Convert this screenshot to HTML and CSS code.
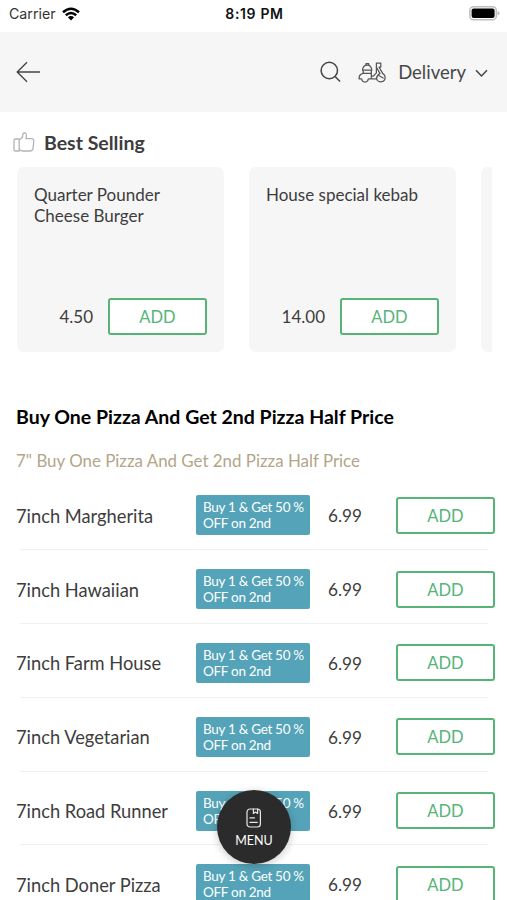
FILE: index.html
```html
<!DOCTYPE html>
<html lang="en">
<head>
<meta charset="utf-8">
<title>Menu</title>
<link rel="stylesheet" href="styles.css">
</head>
<body>
<div class="screen">
  <div class="status">
    <div class="carrier"><span>Carrier</span>
      <svg width="18" height="14" viewBox="0 0 18 14"><g fill="none" stroke="#000" stroke-width="2.5"><path d="M1 5.2Q9-1.8 17 5.2"/><path d="M3.8 8.2Q9 3.8 14.2 8.2"/></g><path d="M5.9 10.3Q9 7.7 12.1 10.3L9 13.6Z"/></svg>
    </div>
    <div class="clock">8:19 PM</div>
    <div class="battery"><svg width="31" height="15" viewBox="0 0 31 15"><rect x=".9" y=".8" width="26.4" height="13" rx="3.6" fill="#fff" stroke="#bdbdbd" stroke-width="1.5"/><rect x="2.6" y="2.5" width="23" height="9.6" rx="2" fill="#000"/><path d="M28.6 5Q30.6 5.8 30.6 7.3T28.6 9.6Z" fill="#b5b5b5"/></svg></div>
  </div>

  <header class="bar">
    <svg class="back" width="25" height="22" viewBox="0 0 25 22"><path d="M24 11H1.5M11 1.3L1.2 11L11 20.7" fill="none" stroke="#444" stroke-width="1.35"/></svg>
    <svg class="search" width="21" height="22" viewBox="0 0 21 22"><g fill="none" stroke="#444" stroke-width="1.5"><circle cx="9.3" cy="9.5" r="8.2"/><path d="M15.1 15.5L20 20.5"/></g></svg>
    <svg class="scooter" width="28" height="21" viewBox="0 0 28 21"><g fill="none" stroke="#555" stroke-width="1.25" stroke-linejoin="round"><path d="M4.5 8.2Q4.8 3 9.3 3Q13.4 3 13.8 8.2Z"/><path d="M8 3V1.5H10.7V3"/><path d="M5.2 8.2V11.4H13.3V8.2"/><path d="M5.2 11.4Q1 12 1 16.8H3.8M10.2 16.8H18.4Q19.2 12.8 22 11.4L18.4 5.2V1.2H22.8V5H21L24.8 11.6Q27.2 12.8 27 15.2"/><path d="M13.3 11.4V16.8M18.4 5.2V10.8L15.3 14.2H13.3"/><path d="M3.8 16.8A3.2 3.2 0 0 0 10.2 16.8M18.6 16.8A4.1 3.6 0 0 0 27 15.2M20.3 13.2L25.6 16.2"/></g></svg>
    <span class="mode">Delivery</span>
    <svg class="chev" width="13" height="9" viewBox="0 0 13 9"><path d="M1 1.3L6.5 7L12 1.3" fill="none" stroke="#444" stroke-width="1.5"/></svg>
  </header>

  <h2 class="best">
    <svg width="22" height="21" viewBox="0 0 22 21"><g fill="none" stroke="#b4b4b4" stroke-width="1.3" stroke-linejoin="round"><path d="M6.2 19H2.4Q1 19 1 17.5V8.6Q1 7 2.4 7H6.2Z"/><path d="M6.2 7.6Q10 6.2 9.8 3Q9.7 1 11.4 1Q13.6 1 13.4 4L13 6.6H18.6Q21 6.8 20.8 9.2L20 16.4Q19.6 19 17 19H10Q8 19 6.2 17.6"/></g></svg>
    <span>Best Selling</span>
  </h2>

  <div class="cards">
    <article class="card"><h3>Quarter Pounder Cheese Burger</h3><div class="buy"><span>4.50</span><button>ADD</button></div></article>
    <article class="card"><h3>House special kebab</h3><div class="buy"><span>14.00</span><button>ADD</button></div></article>
    <article class="card"></article>
  </div>

  <h2 class="offer">Buy One Pizza And Get 2nd Pizza Half Price</h2>
  <p class="sub">7" Buy One Pizza And Get 2nd Pizza Half Price</p>

  <ul class="list">
    <li><span class="name">7inch Margherita</span><span class="badge">Buy 1 &amp; Get 50 %<br>OFF on 2nd</span><span class="price">6.99</span><button>ADD</button></li>
    <li><span class="name">7inch Hawaiian</span><span class="badge">Buy 1 &amp; Get 50 %<br>OFF on 2nd</span><span class="price">6.99</span><button>ADD</button></li>
    <li><span class="name">7inch Farm House</span><span class="badge">Buy 1 &amp; Get 50 %<br>OFF on 2nd</span><span class="price">6.99</span><button>ADD</button></li>
    <li><span class="name">7inch Vegetarian</span><span class="badge">Buy 1 &amp; Get 50 %<br>OFF on 2nd</span><span class="price">6.99</span><button>ADD</button></li>
    <li><span class="name">7inch Road Runner</span><span class="badge">Buy 1 &amp; Get 50 %<br>OFF on 2nd</span><span class="price">6.99</span><button>ADD</button></li>
    <li><span class="name">7inch Doner Pizza</span><span class="badge">Buy 1 &amp; Get 50 %<br>OFF on 2nd</span><span class="price">6.99</span><button>ADD</button></li>
  </ul>

  <div class="fab">
    <svg width="16" height="20" viewBox="0 0 16 20"><g fill="none" stroke="#e8e8e8" stroke-width="1.2" stroke-linejoin="round" stroke-linecap="round"><rect x="1" y="1" width="13.4" height="18" rx="3"/><path d="M7.4 1V5.4L9.5 4L11.6 5.4V1M4 9.9H8.5M4 14.4H11.2"/></g></svg>
    <span>MENU</span>
  </div>
</div>
</body>
</html>
```

FILE: styles.css
```css
* { box-sizing: border-box; margin: 0; padding: 0; }
body { background: #fff; font-family: Lato, sans-serif; color: #3d3d3d; }
svg { display: block; flex: none; }
.screen { position: relative; width: 507px; height: 900px; overflow: hidden; }

.status { height: 32px; display: grid; grid-template-columns: 1fr auto 1fr; align-items: center; padding: 0 7px 5px 9px; font-family: Inter, sans-serif; }
.carrier { display: flex; align-items: center; gap: 6px; font-size: 14.2px; color: #333; }
.clock { font-size: 14px; font-weight: 600; color: #111; letter-spacing: .65px; }
.battery { justify-self: end; }

.bar { height: 80px; background: #f6f6f6; display: flex; align-items: center; padding: 0 19px 0 16px; }
.search { margin-left: auto; }
.scooter { margin-left: 17px; }
.mode { margin-left: 12px; font-size: 18.5px; color: #484848; white-space: nowrap; }
.chev { margin-left: 9px; margin-top: 3px; }

.best { display: flex; align-items: center; gap: 9px; height: 55px; padding: 5px 0 0 13px; font-size: 19.5px; font-weight: 700; }

.cards { display: flex; gap: 25px; margin: 0 15px 0 17px; height: 185px; overflow: hidden; }
.card { flex: 0 0 207px; border-radius: 7px; background: #f6f6f6; padding: 18px 17px 17px; display: flex; flex-direction: column; justify-content: space-between; }
.card h3 { width: 160px; font-size: 17px; line-height: 20.5px; font-weight: 400; white-space: normal; }
.buy { display: flex; justify-content: flex-end; align-items: center; gap: 15px; font-size: 17px; }
button { flex: none; width: 99px; height: 37px; border: 2px solid #56b476; border-radius: 3px; background: #fff; color: #56b476; font: 400 16.5px Lato, sans-serif; padding-top: 1px; }

.offer { margin: 53px 0 0 16px; font-size: 19.5px; line-height: 24px; font-weight: 700; color: #000; white-space: nowrap; }
.sub { margin: 21px 0 0 16px; font-size: 16.9px; line-height: 22px; color: #b3a58a; white-space: nowrap; }

.list { list-style: none; margin-top: 4.5px; }
.list li { position: relative; display: flex; align-items: center; height: 73.8px; padding: 4px 12px 0 16px; }
.list li::after { content: ""; position: absolute; left: 20px; right: 19px; bottom: 0; height: 1px; background: #f1f1f1; }
.name { width: 180px; font-size: 18.3px; padding-top: 1px; white-space: nowrap; }
.badge { width: 114px; height: 40px; border-radius: 2px; background: #54a3b8; color: #fff; padding: 4px 0 0 7px; font-size: 13.5px; line-height: 16px; letter-spacing: -.3px; white-space: nowrap; }
.price { margin-left: 18px; padding-top: 1px; font-size: 17.2px; }
.list button { margin-left: auto; }

.fab { position: absolute; left: 217px; top: 790px; width: 74px; height: 74px; border-radius: 50%; background: #2c2b2c; color: #fff; box-shadow: 0 2px 8px rgba(0,0,0,.22); display: flex; flex-direction: column; align-items: center; padding-top: 18px; gap: 5px; font-size: 12.5px; line-height: 16px; }
```
